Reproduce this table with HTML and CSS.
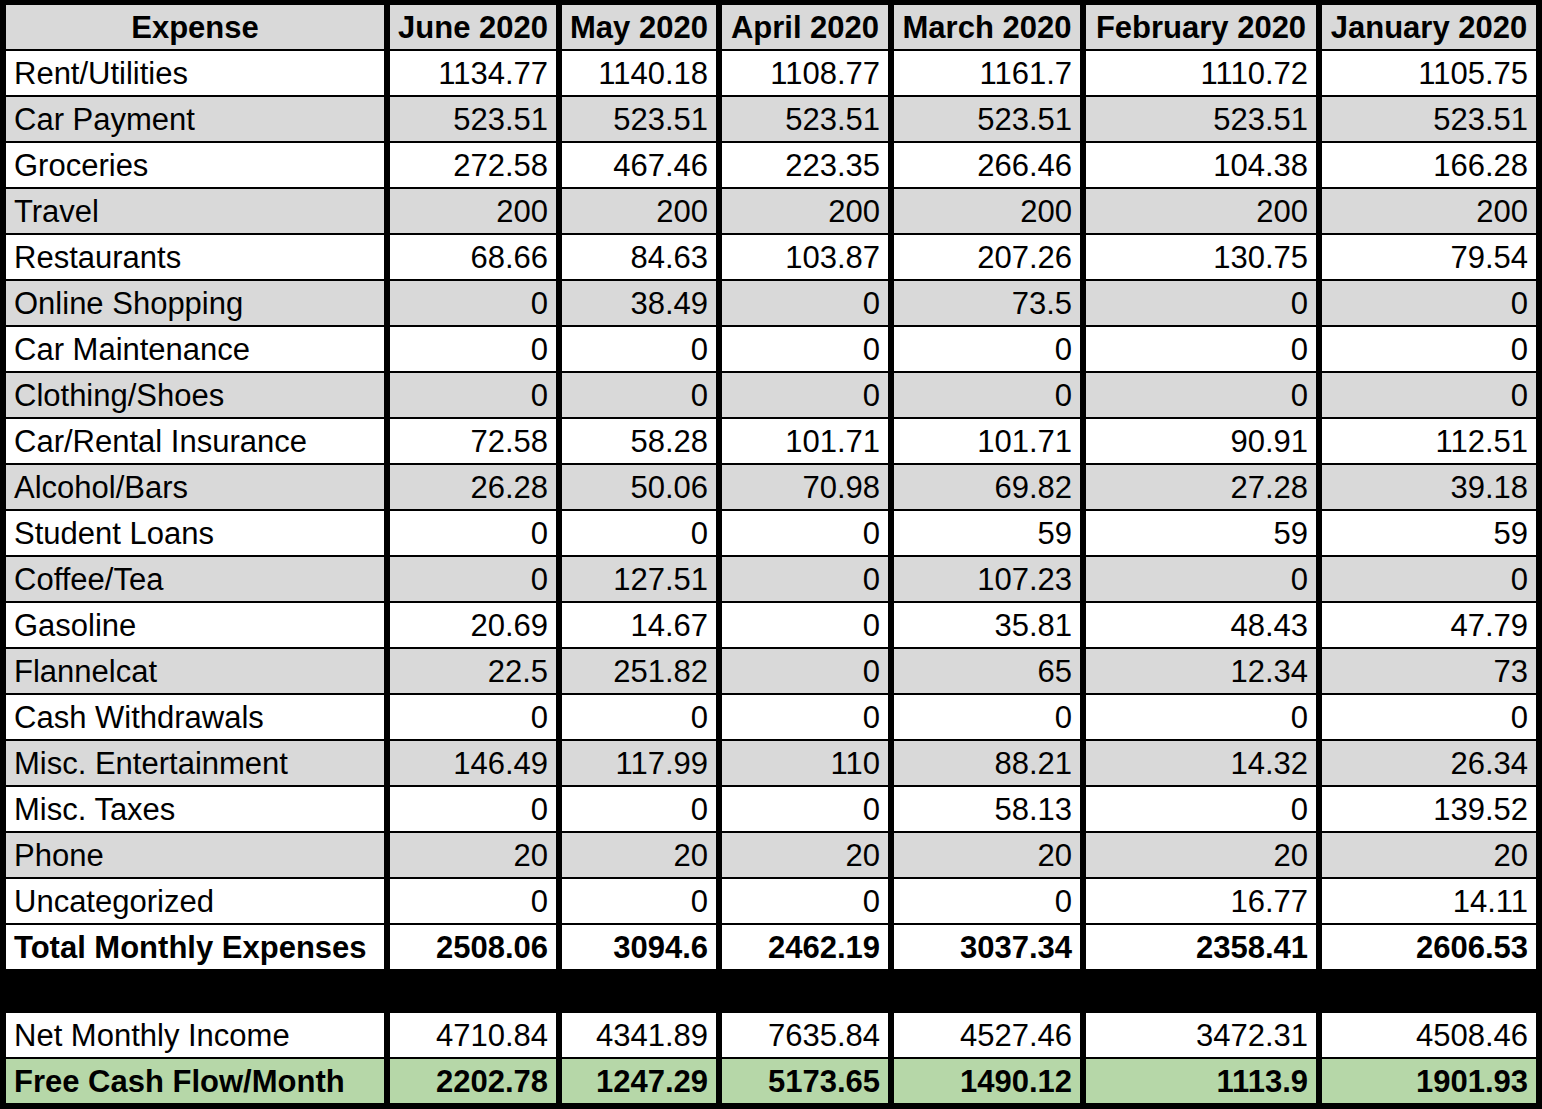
FILE: index.html
```html
<!DOCTYPE html>
<html lang="en">
<head>
<meta charset="utf-8">
<title>Monthly Expenses 2020</title>
<link rel="stylesheet" href="styles.css">
</head>
<body>
<div class="sheet">
  <table class="grid expenses">
    <colgroup>
      <col class="c-label"><col class="c-jun"><col class="c-may"><col class="c-apr"><col class="c-mar"><col class="c-feb"><col class="c-jan">
    </colgroup>
    <thead>
      <tr class="head">
        <th>Expense</th><th>June 2020</th><th>May 2020</th><th>April 2020</th><th>March 2020</th><th>February 2020</th><th>January 2020</th>
      </tr>
    </thead>
    <tbody>
      <tr><td>Rent/Utilities</td><td>1134.77</td><td>1140.18</td><td>1108.77</td><td>1161.7</td><td>1110.72</td><td>1105.75</td></tr>
      <tr class="alt"><td>Car Payment</td><td>523.51</td><td>523.51</td><td>523.51</td><td>523.51</td><td>523.51</td><td>523.51</td></tr>
      <tr><td>Groceries</td><td>272.58</td><td>467.46</td><td>223.35</td><td>266.46</td><td>104.38</td><td>166.28</td></tr>
      <tr class="alt"><td>Travel</td><td>200</td><td>200</td><td>200</td><td>200</td><td>200</td><td>200</td></tr>
      <tr><td>Restaurants</td><td>68.66</td><td>84.63</td><td>103.87</td><td>207.26</td><td>130.75</td><td>79.54</td></tr>
      <tr class="alt"><td>Online Shopping</td><td>0</td><td>38.49</td><td>0</td><td>73.5</td><td>0</td><td>0</td></tr>
      <tr><td>Car Maintenance</td><td>0</td><td>0</td><td>0</td><td>0</td><td>0</td><td>0</td></tr>
      <tr class="alt"><td>Clothing/Shoes</td><td>0</td><td>0</td><td>0</td><td>0</td><td>0</td><td>0</td></tr>
      <tr><td>Car/Rental Insurance</td><td>72.58</td><td>58.28</td><td>101.71</td><td>101.71</td><td>90.91</td><td>112.51</td></tr>
      <tr class="alt"><td>Alcohol/Bars</td><td>26.28</td><td>50.06</td><td>70.98</td><td>69.82</td><td>27.28</td><td>39.18</td></tr>
      <tr><td>Student Loans</td><td>0</td><td>0</td><td>0</td><td>59</td><td>59</td><td>59</td></tr>
      <tr class="alt"><td>Coffee/Tea</td><td>0</td><td>127.51</td><td>0</td><td>107.23</td><td>0</td><td>0</td></tr>
      <tr><td>Gasoline</td><td>20.69</td><td>14.67</td><td>0</td><td>35.81</td><td>48.43</td><td>47.79</td></tr>
      <tr class="alt"><td>Flannelcat</td><td>22.5</td><td>251.82</td><td>0</td><td>65</td><td>12.34</td><td>73</td></tr>
      <tr><td>Cash Withdrawals</td><td>0</td><td>0</td><td>0</td><td>0</td><td>0</td><td>0</td></tr>
      <tr class="alt"><td>Misc. Entertainment</td><td>146.49</td><td>117.99</td><td>110</td><td>88.21</td><td>14.32</td><td>26.34</td></tr>
      <tr><td>Misc. Taxes</td><td>0</td><td>0</td><td>0</td><td>58.13</td><td>0</td><td>139.52</td></tr>
      <tr class="alt"><td>Phone</td><td>20</td><td>20</td><td>20</td><td>20</td><td>20</td><td>20</td></tr>
      <tr><td>Uncategorized</td><td>0</td><td>0</td><td>0</td><td>0</td><td>16.77</td><td>14.11</td></tr>
      <tr class="total"><td>Total Monthly Expenses</td><td>2508.06</td><td>3094.6</td><td>2462.19</td><td>3037.34</td><td>2358.41</td><td>2606.53</td></tr>
    </tbody>
  </table>

  <table class="grid summary">
    <colgroup>
      <col class="c-label"><col class="c-jun"><col class="c-may"><col class="c-apr"><col class="c-mar"><col class="c-feb"><col class="c-jan">
    </colgroup>
    <tbody>
      <tr><td>Net Monthly Income</td><td>4710.84</td><td>4341.89</td><td>7635.84</td><td>4527.46</td><td>3472.31</td><td>4508.46</td></tr>
      <tr class="cash"><td>Free Cash Flow/Month</td><td>2202.78</td><td>1247.29</td><td>5173.65</td><td>1490.12</td><td>1113.9</td><td>1901.93</td></tr>
    </tbody>
  </table>
</div>
</body>
</html>
```

FILE: styles.css
```css
html, body {
  margin: 0;
  padding: 0;
  background: #000;
}

body {
  font-family: "Liberation Sans", Arial, sans-serif;
  font-size: 31px;
  color: #000;
}

.sheet {
  width: 1542px;
  padding-top: 3px;
}

.grid {
  width: 1542px;
  table-layout: fixed;
  border-collapse: separate;
  border-spacing: 6px 2px;
  font-family: "Liberation Sans", Arial, sans-serif;
  font-size: 31px;
}

.c-label { width: 378px; }
.c-jun { width: 166px; }
.c-may { width: 154px; }
.c-apr { width: 166px; }
.c-mar { width: 186px; }
.c-feb { width: 230px; }
.c-jan { width: 214px; }

.grid th,
.grid td {
  box-sizing: border-box;
  height: 44px;
  padding: 1px 8px 0 8px;
  line-height: 43px;
  white-space: nowrap;
  overflow: hidden;
  background: #fff;
  text-align: right;
  font-weight: normal;
}

.grid td:first-child {
  text-align: left;
}

.grid .head th {
  background: #d9d9d9;
  font-weight: bold;
  text-align: center;
  padding-left: 0;
  padding-right: 0;
}

.grid .alt td {
  background: #d9d9d9;
}

.grid .total td {
  font-weight: bold;
}

.summary {
  margin-top: 40px;
}

.grid .cash td {
  background: #b6d7a8;
  font-weight: bold;
}
```
